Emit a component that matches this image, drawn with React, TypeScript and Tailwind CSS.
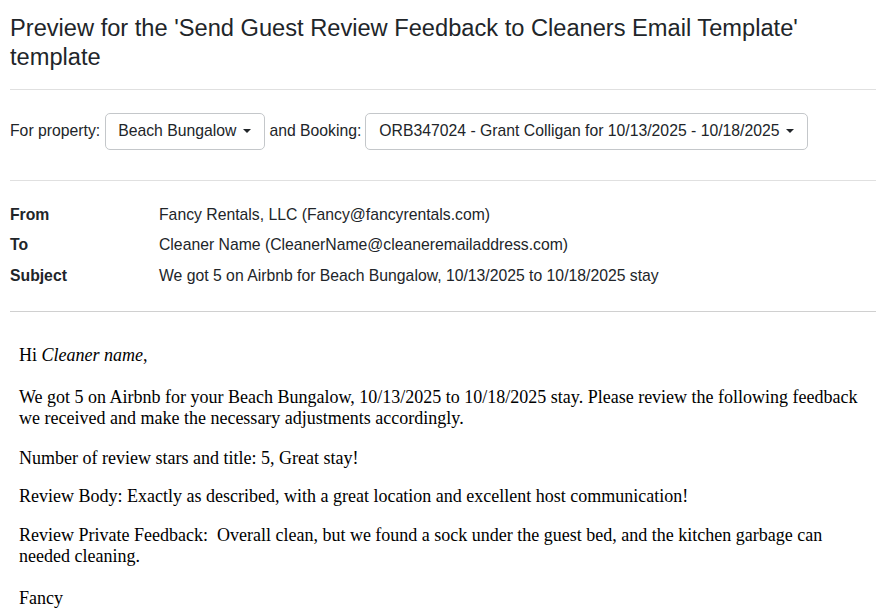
import React from "react";

function Caret() {
  return <span className="ml-[7px] inline-block w-0 h-0 border-t-[4px] border-t-[#212529] border-x-[4px] border-x-transparent align-middle"></span>;
}

export default function App() {
  return (
    <div className="px-[10px] pt-[14px] bg-white text-[#212529] min-h-[615px]" style={{ fontFamily: '"Liberation Sans", Arial, sans-serif' }}>
      <h1 className="text-[23.65px] leading-[28.8px] font-normal">
        Preview for the 'Send Guest Review Feedback to Cleaners Email Template' template
      </h1>
      <hr className="mt-[17px] border-t border-[#e0e0e0]" />
      <div className="flex items-center mt-[23px] text-[15.75px] leading-[24px]">
        <span>For property:</span>
        <button className="ml-[5px] flex items-center h-[37px] pl-[12px] pr-[13px] border border-[#c4c7ca] rounded-[5px] bg-white">
          Beach Bungalow<Caret />
        </button>
        <span className="ml-[4px]">and Booking:</span>
        <button className="ml-[4px] flex items-center h-[37px] pl-[13px] pr-[13px] border border-[#c4c7ca] rounded-[5px] bg-white">
          ORB347024 - Grant Colligan for 10/13/2025 - 10/18/2025<Caret />
        </button>
      </div>
      <hr className="mt-[30px] border-t border-[#e0e0e0]" />
      <div className="mt-[19px] text-[15.75px] leading-[24px]">
        {[
          ["From", "Fancy Rentals, LLC (Fancy@fancyrentals.com)"],
          ["To", "Cleaner Name (CleanerName@cleaneremailaddress.com)"],
          ["Subject", "We got 5 on Airbnb for Beach Bungalow, 10/13/2025 to 10/18/2025 stay"],
        ].map(([k, v]) => (
          <div key={k} className="flex h-[30.5px] items-center">
            <div className="w-[149px] font-bold">{k}</div>
            <div>{v}</div>
          </div>
        ))}
      </div>
      <hr className="mt-[20px] border-t border-[#d0d0d0]" />
      <div className="pl-[9px] pt-[33px] text-black text-[18px] leading-[21px]" style={{ fontFamily: '"Liberation Serif", "Times New Roman", serif' }}>
        <p>Hi <i>Cleaner name</i>,</p>
        <p className="mt-[21px]">We got 5 on Airbnb for your Beach Bungalow, 10/13/2025 to 10/18/2025 stay. Please review the following feedback we received and make the necessary adjustments accordingly.</p>
        <p className="mt-[19px]">Number of review stars and title: 5, Great stay!</p>
        <p className="mt-[17px]">Review Body: Exactly as described, with a great location and excellent host communication!</p>
        <p className="mt-[18px]">Review Private Feedback:&nbsp; Overall clean, but we found a sock under the guest bed, and the kitchen garbage can needed cleaning.</p>
        <p className="mt-[21px]">Fancy</p>
      </div>
    </div>
  );
}
